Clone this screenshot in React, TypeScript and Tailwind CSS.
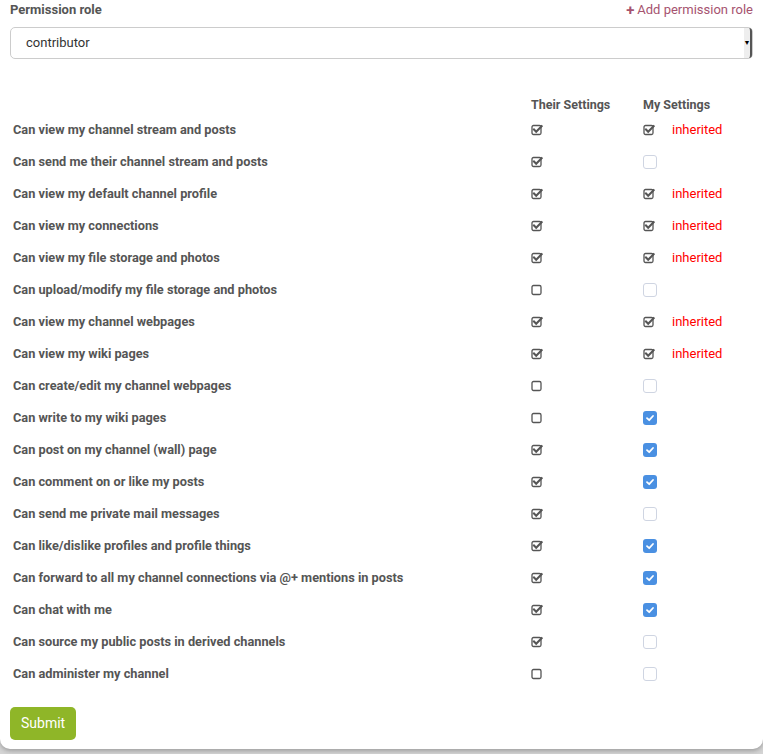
import React from "react";

type Mine = "off" | "inherited" | "on";

const rows: { label: string; theirs: boolean; mine: Mine }[] = [
  { label: "Can view my channel stream and posts", theirs: true, mine: "inherited" },
  { label: "Can send me their channel stream and posts", theirs: true, mine: "off" },
  { label: "Can view my default channel profile", theirs: true, mine: "inherited" },
  { label: "Can view my connections", theirs: true, mine: "inherited" },
  { label: "Can view my file storage and photos", theirs: true, mine: "inherited" },
  { label: "Can upload/modify my file storage and photos", theirs: false, mine: "off" },
  { label: "Can view my channel webpages", theirs: true, mine: "inherited" },
  { label: "Can view my wiki pages", theirs: true, mine: "inherited" },
  { label: "Can create/edit my channel webpages", theirs: false, mine: "off" },
  { label: "Can write to my wiki pages", theirs: false, mine: "on" },
  { label: "Can post on my channel (wall) page", theirs: true, mine: "on" },
  { label: "Can comment on or like my posts", theirs: true, mine: "on" },
  { label: "Can send me private mail messages", theirs: true, mine: "off" },
  { label: "Can like/dislike profiles and profile things", theirs: true, mine: "on" },
  { label: "Can forward to all my channel connections via @+ mentions in posts", theirs: true, mine: "on" },
  { label: "Can chat with me", theirs: true, mine: "on" },
  { label: "Can source my public posts in derived channels", theirs: true, mine: "off" },
  { label: "Can administer my channel", theirs: false, mine: "off" },
];

function CheckSquare({ checked }: { checked: boolean }) {
  return (
    <svg width="12" height="12" viewBox="0 0 12 12" className="block">
      <rect x="1" y="1.5" width="9" height="9" rx="1.5" fill="none" stroke="#555" strokeWidth="1.3" />
      {checked && (
        <path d="M3 5.6 L5.2 7.8 L10.6 2.2" fill="none" stroke="#555" strokeWidth="2.1" strokeLinecap="square" />
      )}
    </svg>
  );
}

function MyBox({ state }: { state: Mine }) {
  if (state === "inherited") return <CheckSquare checked />;
  if (state === "on")
    return (
      <div className="w-[14px] h-[14px] rounded-[3px] bg-[#4a90e2] flex items-center justify-center">
        <svg width="10" height="10" viewBox="0 0 10 10">
          <path d="M2 5.2 L4.2 7.2 L8 3" fill="none" stroke="#fff" strokeWidth="1.8" strokeLinecap="round" strokeLinejoin="round" />
        </svg>
      </div>
    );
  return <div className="w-[14px] h-[14px] rounded-[3px] border border-[#cfd5e2] bg-white" />;
}

export default function App() {
  return (
    <div className="min-h-[754px] bg-[#d4d4d4] font-['Roboto',sans-serif] text-[#555]">
      <div className="h-[3px] bg-[#4b1730]" />
      <div className="bg-white rounded-b-[10px] shadow-[0_2px_4px_rgba(0,0,0,0.25)] px-[10px] pb-[9px]">
        <div className="flex items-center justify-between h-[20px] -mt-[3px]">
          <span className="text-[13px] font-bold">Permission role</span>
          <span className="text-[13px] text-[#a6536f] flex items-center gap-[3px]">
            <span className="font-bold text-[15px] leading-none">+</span>
            Add permission role
          </span>
        </div>
        <div className="mt-[7px] h-[32px] rounded-[5px] border border-[#ccc] flex items-center pl-[15px] text-[13px] text-[#333] relative">
          contributor
          <div className="absolute right-0 top-0 bottom-0 w-[8px] bg-[#eee] border-r-2 border-[#555] rounded-r-[3px] flex items-center justify-center">
            <span className="text-[7px] text-black leading-none">▼</span>
          </div>
        </div>

        <div className="mt-[37px] grid grid-cols-[518px_112px_29px_1fr] pl-[3px]">
          <div className="h-[18px]" />
          <div className="h-[18px] text-[12.5px] font-bold leading-[18px] text-[#555]">Their Settings</div>
          <div className="h-[18px] text-[12.5px] font-bold leading-[18px] text-[#555] col-span-2">My Settings</div>
          {rows.map((r) => (
            <React.Fragment key={r.label}>
              <div className="h-[32px] flex items-center text-[12.75px] font-bold text-[#555]">{r.label}</div>
              <div className="h-[32px] flex items-center">
                <CheckSquare checked={r.theirs} />
              </div>
              <div className="h-[32px] flex items-center">
                <MyBox state={r.mine} />
              </div>
              <div className="h-[32px] flex items-center text-[13px] text-[#ff0000]">
                {r.mine === "inherited" ? "inherited" : ""}
              </div>
            </React.Fragment>
          ))}
        </div>

        <button className="mt-[17px] h-[33px] px-[11px] rounded-[5px] bg-[#8fb628] text-white text-[14px]">
          Submit
        </button>
      </div>
    </div>
  );
}
